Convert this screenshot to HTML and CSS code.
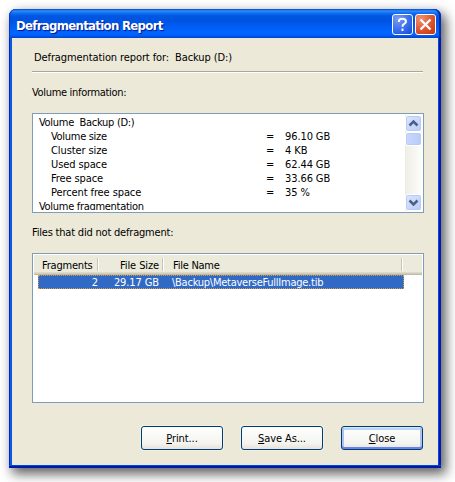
FILE: index.html
```html
<!DOCTYPE html>
<html lang="en">
<head>
<meta charset="utf-8">
<title>Defragmentation Report</title>
<link rel="stylesheet" href="styles.css">
</head>
<body>
<main class="window">
  <header class="titlebar">
    <h1>Defragmentation Report</h1>
    <button class="caption help" aria-label="Help"><svg width="21" height="21" viewBox="0 0 21 21"><path d="M7 8V6.5Q7.5 4.7 10.5 4.7T14 7.2Q14 8.8 12.2 9.8T10.5 12.7M10.5 14.5V17" fill="none" stroke="#fff" stroke-width="2"/></svg></button>
    <button class="caption close" aria-label="Close"><svg width="21" height="21" viewBox="0 0 21 21"><path d="M5.5 5.5l10 10M15.5 5.5l-10 10" stroke="#fff" stroke-width="2.3"/></svg></button>
  </header>
  <section class="content">
    <div class="report"><span class="rep1">Defragmentation report for:</span><span class="rep2">Backup (D:)</span></div>
    <div class="label vol"><span>Volume information:</span></div>
    <div class="info">
      <div class="lines">
        <div class="line top"><span class="tight">Volume&nbsp; Backup (D:)</span></div>
        <div class="line"><span class="tight">Volume size</span><b>=</b><span>96.10 GB</span></div>
        <div class="line"><span>Cluster size</span><b>=</b><span>4 KB</span></div>
        <div class="line"><span>Used space</span><b>=</b><span>62.44 GB</span></div>
        <div class="line"><span>Free space</span><b>=</b><span>33.66 GB</span></div>
        <div class="line"><span>Percent free space</span><b>=</b><span>35 %</span></div>
        <div class="line top"><span class="tight">Volume fragmentation</span></div>
      </div>
      <div class="scroll">
        <div class="arrow"><svg width="15" height="15" viewBox="0 0 15 15"><path d="M3.5 9.5l4-4 4 4" fill="none" stroke="#4d6185" stroke-width="2.5"/></svg></div>
        <div class="thumb"></div>
        <div class="track"></div>
        <div class="arrow"><svg width="15" height="15" viewBox="0 0 15 15"><path d="M3.5 5.5l4 4 4-4" fill="none" stroke="#4d6185" stroke-width="2.5"/></svg></div>
      </div>
    </div>
    <div class="label files"><span>Files that did not defragment:</span></div>
    <div class="table">
      <div class="head"><div class="c1">Fragments</div><div class="c2">File Size</div><div class="c3">File Name</div></div>
      <div class="row"><div class="r1">2</div><div class="r2">29.17 GB</div><div class="r3">\Backup\MetaverseFullImage.tib</div></div>
    </div>
    <footer class="buttons">
      <button class="btn"><span><u>P</u>rint...</span></button>
      <button class="btn"><span><u>S</u>ave As...</span></button>
      <button class="btn default"><span><u>C</u>lose</span></button>
    </footer>
  </section>
</main>
</body>
</html>
```
FILE: styles.css
```css
* { box-sizing: border-box; }
body {
  margin: 0;
  padding: 9px 14px 14px 9px;
  width: 455px;
  height: 482px;
  overflow: hidden;
  background: #fff;
  color: #000;
  font: 11px/14px "DejaVu Sans", sans-serif;
  font-stretch: condensed;
  letter-spacing: -.1px;
  white-space: nowrap;
}
button { font: inherit; letter-spacing: inherit; padding: 0; margin: 0; color: #000; }
.window {
  width: 432px;
  height: 459px;
  border-radius: 7px 7px 0 0;
  background: linear-gradient(90deg, #0025c4 0 1px, #0d5cf0 1px 2px, #0855dd 2px 3px, #0043d8 3px 429px, #0047dd 429px 430px, #0019a8 430px);
  box-shadow: 4px 5px 12px 1px rgba(0, 0, 0, .62);
}
.window::after {
  content: "";
  display: block;
  height: 3px;
  background: linear-gradient(#0047dd 1px, #0019a8 1px);
}
.titlebar {
  display: flex;
  height: 29px;
  padding: 5px 5px 0 7px;
  border-radius: 7px 7px 0 0;
  background: linear-gradient(#0048d0 0, #318cfb 2px, #1070f4 4px, #0057df 7px, #0053e2 12px, #005df5 18px, #0066ff 24px, #0061fa 26px, #0042cb 29px);
  box-shadow: inset 1px 0 #0838c5, inset -2px 0 #0029b4;
}
h1 {
  flex: 1;
  margin: 3px 0 0;
  font: bold 13px/17px "DejaVu Sans", sans-serif;
  font-stretch: condensed;
  letter-spacing: -.67px;
  color: #fff;
  text-shadow: 1px 1px 1px #00138c;
}
.caption {
  width: 21px;
  height: 21px;
  margin-left: 2px;
  border: 1px solid #fff;
  border-radius: 3px;
  background: radial-gradient(circle at 25% 20%, #7b9cf5, #396eea 55%, #1449d4);
}
.caption svg { display: block; margin: -1px; }
.close { background: radial-gradient(circle at 25% 20%, #ee9271, #de542f 55%, #c43406); }
.content {
  width: 426px;
  height: 427px;
  margin-left: 3px;
  padding: 12px 15px 0 20px;
  background: #ece9d8;
}
.report {
  width: 391px;
  height: 22px;
  padding: 1px 0 0 2px;
  border-bottom: 1px solid #aca899;
  box-shadow: 0 1px #fff;
}
.rep2 { margin-left: 6px; }
.label { height: 14px; padding-top: 1px; letter-spacing: -.2px; }
.vol { margin: 13px 0 14px; letter-spacing: -.32px; }
.tight { letter-spacing: -.3px; }
.info {
  display: flex;
  width: 392px;
  height: 100px;
  padding: 1px;
  border: 1px solid #7f9db9;
  background: #fff;
}
.lines { flex: 1; height: 95px; padding-top: 1px; overflow: hidden; }
.line {
  display: grid;
  grid-template-columns: 215px 19px 1fr;
  height: 14px;
  padding-left: 17px;
}
.top { padding-left: 5px; }
.line b { font-weight: 400; }
.scroll {
  display: flex;
  flex-direction: column;
  width: 17px;
  height: 96px;
  background: linear-gradient(90deg, #eeede5, #fefefb);
}
.arrow, .thumb {
  height: 17px;
  border: 1px solid #fff;
  border-radius: 3px;
  background: linear-gradient(135deg, #dce6ff, #b9ccfa);
  box-shadow: inset 0 0 0 1px #b8caf5;
}
.arrow svg { display: block; }
.thumb { height: 14px; background: linear-gradient(90deg, #c9d8ff, #b9cbfa); }
.track { flex: 1; }
.files { margin: 12px 0 14px; }
.table {
  width: 392px;
  height: 150px;
  padding: 1px;
  border: 1px solid #7f9db9;
  background: #fff;
}
.head {
  display: grid;
  grid-template-columns: 65px 65px 239px;
  height: 20px;
  padding-top: 3px;
  line-height: 16px;
  background: linear-gradient(#ebeadb 17px, #dedac9 17px 18px, #d1ccbb 18px 19px, #c0bba9 19px);
}
.head div { height: 13px; border-right: 1px solid #fff; box-shadow: inset -1px 0 #c8c5b2; }
.head .c1 { padding-left: 8px; letter-spacing: -.2px; }
.c2 { padding-left: 21px; }
.head .c3 { padding-left: 9px; letter-spacing: -.25px; }
.row {
  display: grid;
  grid-template-columns: 59px 61px 1fr;
  width: 366px;
  height: 14px;
  margin-left: 4px;
  line-height: 13px;
  color: #fff;
  background: #316ac5;
  border: 1px dotted #d99a3c;
}
.r1, .r2 { text-align: right; }
.r3 { padding-left: 13px; letter-spacing: -.25px; }
.buttons { display: flex; gap: 18px; margin: 23px 0 0 109px; }
.btn {
  flex: none;
  width: 82px;
  height: 24px;
  padding-top: 1px;
  border: 1px solid #003c74;
  border-radius: 3px;
  background: linear-gradient(#fff, #f3f3ef 75%, #e5e2d9);
  box-shadow: 0 0 0 1px rgba(255, 255, 255, .35);
}
.default { box-shadow: inset 0 1px #cee7ff, inset 0 -2px #6982ee, inset 2px 0 #a9c3f4, inset -2px 0 #a9c3f4, inset 0 3px #bcd4f6; }
```
